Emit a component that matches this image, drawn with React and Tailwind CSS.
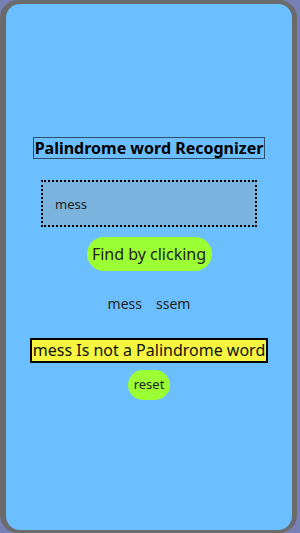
import React, { useState } from 'react';

export default function App() {
  const [word, setWord] = useState('mess');
  const reversed = word.split('').reverse().join('');

  return (
    <div className="w-[300px] h-[533px] bg-[#7680b4] font-['Noto_Sans',sans-serif]">
      <div className="w-[297px] h-[533px] bg-[#6b6b6b] rounded-[18px] pl-[6px] pt-[4px] pr-[5px] pb-[3px]">
        <div className="h-full bg-[#6bbfff] rounded-[14px] flex flex-col items-center pt-[133px] text-[#111]">
          <h1 className="border border-[#2f4f6f] px-[1px] text-[16px] leading-[20px] font-bold text-black">
            Palindrome word Recognizer
          </h1>

          {/* input */}
          <input
            value={word}
            onChange={(e) => setWord(e.target.value)}
            className="mt-[21px] w-[216px] h-[47px] bg-[#7ab4de] border-2 border-dotted border-black pl-[12px] text-[13px] text-[#222] outline-none"
          />

          <button className="mt-[10px] w-[125px] h-[34px] rounded-full bg-[#9cff33] text-[16px] text-[#222]">
            Find by clicking
          </button>

          <div className="mt-[22px] flex gap-[14px] text-[14px] text-[#222]">
            <span>{word}</span>
            <span>{reversed}</span>
          </div>

          <div className="mt-[24px] border-2 border-black bg-[#f6f640] px-[1px] text-[16px] leading-[21px] text-[#111]">
            {word} Is not a Palindrome word
          </div>

          <button className="mt-[7px] w-[42px] h-[30px] rounded-full bg-[#9cff33] text-[13px] text-[#222]">
            reset
          </button>
        </div>
      </div>
    </div>
  );
}
